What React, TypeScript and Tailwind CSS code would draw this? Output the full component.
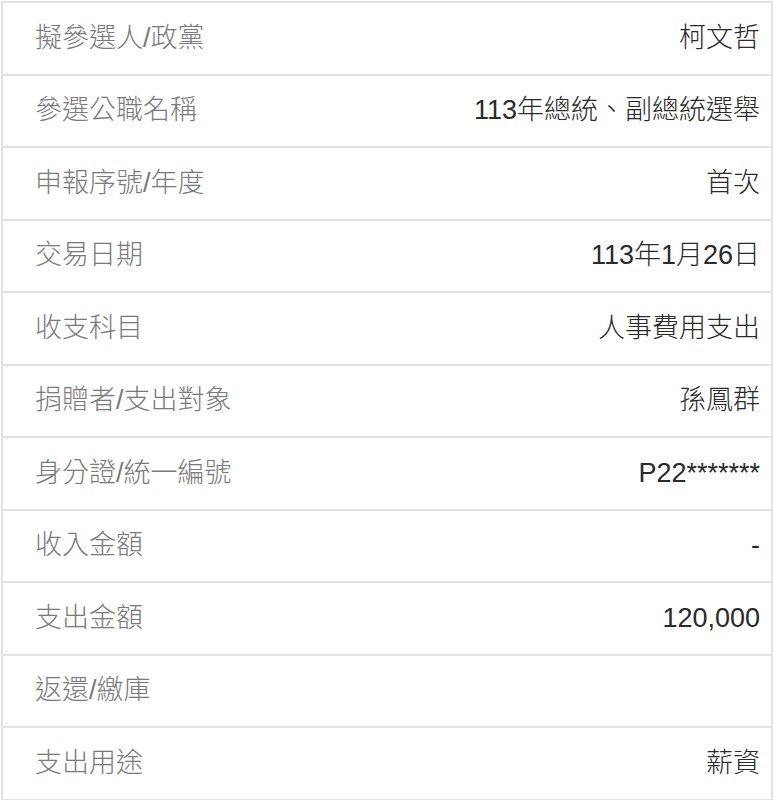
import React from 'react';

const rows: { label: string; value: string }[] = [
  { label: '擬參選人/政黨', value: '柯文哲' },
  { label: '參選公職名稱', value: '113年總統、副總統選舉' },
  { label: '申報序號/年度', value: '首次' },
  { label: '交易日期', value: '113年1月26日' },
  { label: '收支科目', value: '人事費用支出' },
  { label: '捐贈者/支出對象', value: '孫鳳群' },
  { label: '身分證/統一編號', value: 'P22*******' },
  { label: '收入金額', value: '-' },
  { label: '支出金額', value: '120,000' },
  { label: '返還/繳庫', value: '' },
  { label: '支出用途', value: '薪資' },
];

const App: React.FC = () => {
  return (
    <div className="min-h-screen bg-white pt-[1px] px-[1px] font-['Liberation_Sans','Noto_Sans_CJK_TC',sans-serif]">
      {/* Record table */}
      <div className="border-x-2 border-t-2 border-[#e2e2e2]">
        {rows.map((row) => (
          <div
            key={row.label}
            className="flex h-[72.5px] items-center justify-between border-b-2 border-[#e2e2e2] pl-[32px] pr-[11px] text-[27px] leading-none font-light"
          >
            <span className="text-[#7a7a7a]">{row.label}</span>
            <span className="text-[#2a2a2a]">{row.value}</span>
          </div>
        ))}
      </div>
    </div>
  );
};

export default App;
